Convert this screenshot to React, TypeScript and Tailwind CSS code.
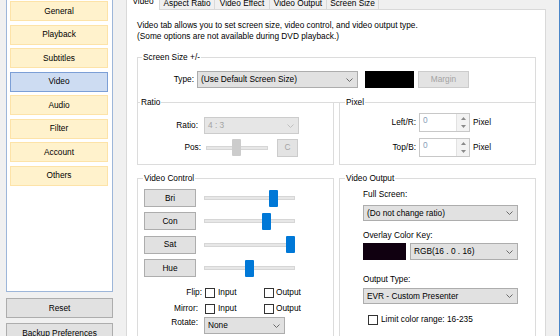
import React from "react";

const Chevron = ({ light = false }: { light?: boolean }) => (
  <svg width="7" height="4" viewBox="0 0 7 4" className="shrink-0">
    <path d="M0.5 0.5 L3.5 3.5 L6.5 0.5" fill="none" stroke={light ? "#c0c0c0" : "#6a6a6a"} strokeWidth="1" />
  </svg>
);

const Select = ({ text, cls, disabled = false }: { text: string; cls: string; disabled?: boolean }) => (
  <div
    className={`flex items-center justify-between pl-[3px] pr-[4px] border shrink-0 ${
      disabled ? "border-[#cccccc] bg-[#e6e6e6] text-[#a3a3a3]" : "border-[#adadad] bg-[#e1e1e1] text-black"
    } ${cls}`}
  >
    <span className="whitespace-nowrap">{text}</span>
    <Chevron light={disabled} />
  </div>
);

const Group = ({
  label,
  legendCls,
  cls,
  children,
}: {
  label: string;
  legendCls: string;
  cls: string;
  children?: React.ReactNode;
}) => (
  <div className={`border border-[#dcdcdc] bg-white flex flex-col ${cls}`}>
    <div className={`-mt-[6px] h-[11px] w-fit px-[1px] bg-white whitespace-nowrap ${legendCls}`}>{label}</div>
    {children}
  </div>
);

const Slider = ({ pos, cls, disabled = false }: { pos: number; cls: string; disabled?: boolean }) => (
  <div className={`relative h-[17px] flex items-center shrink-0 ${cls}`}>
    <div className="w-full h-[4px] bg-[#e7e7e7] border border-[#d6d6d6]" />
    <div
      className={`absolute top-0 w-[9px] h-[17px] rounded-[1px] ${disabled ? "bg-[#cccccc]" : "bg-[#0078d7]"}`}
      style={{ left: pos }}
    />
  </div>
);

const Check = () => <span className="block w-[10px] h-[10px] border border-[#333333] bg-white shrink-0" />;

const Spin = () => (
  <div className="flex w-[51px] h-[19px] border border-[#c8c8c8] bg-white shrink-0">
    <div className="flex-1 pl-[3px] pt-[1px] text-[#8aa0b8]">0</div>
    <div className="w-[13px] flex flex-col bg-[#f3f3f3] border-l border-[#e2e2e2]">
      <div className="flex-1 flex items-center justify-center">
        <svg width="5" height="3" viewBox="0 0 5 3">
          <path d="M2.5 0 L5 3 L0 3 Z" fill="#8a8a8a" />
        </svg>
      </div>
      <div className="flex-1 flex items-center justify-center">
        <svg width="5" height="3" viewBox="0 0 5 3">
          <path d="M0 0 L5 0 L2.5 3 Z" fill="#8a8a8a" />
        </svg>
      </div>
    </div>
  </div>
);

const navItems = ["General", "Playback", "Subtitles", "Video", "Audio", "Filter", "Account", "Others"];

export default function App() {
  return (
    <div className="w-[560px] h-[336px] overflow-hidden bg-[#f0f0f0] flex border-r border-[#4a86c8] font-['Liberation_Sans',Arial,sans-serif] text-[8.3px] leading-[11px] text-black">
      {/* Left column */}
      <div className="w-[126px] shrink-0 pl-[6px] flex flex-col">
        <div className="-mt-[3px] w-[107px] h-[295px] shrink-0 border border-[#9db6d9] bg-white pt-[3px] pl-[3px] flex flex-col gap-[3.5px]">
          {navItems.map((n) => (
            <div
              key={n}
              className={`w-[98px] h-[20px] shrink-0 border flex items-center justify-center ${
                n === "Video" ? "bg-[#cddcf2] border-[#7c9fd6]" : "bg-[#fff2cc] border-[#fde3a8]"
              }`}
            >
              {n}
            </div>
          ))}
        </div>
        <div className="mt-[6px] w-[107px] h-[20px] shrink-0 border border-[#adadad] bg-[#e1e1e1] flex items-center justify-center">
          Reset
        </div>
        <div className="mt-[5px] w-[107px] h-[20px] shrink-0 border border-[#adadad] bg-[#e1e1e1] flex items-center justify-center">
          Backup Preferences
        </div>
      </div>

      {/* Main */}
      <div className="w-[420px] shrink-0 flex flex-col">
        <div className="flex items-end h-[13px] -mt-[4px] shrink-0 relative z-10">
          <div className="w-[34px] h-[14px] -mb-[1px] bg-white border-l border-r border-[#d9d9d9] text-center">Video</div>
          <div className="w-[55px] h-[12px] border-t border-r border-[#d9d9d9] text-center">Aspect Ratio</div>
          <div className="w-[55px] h-[12px] border-t border-r border-[#d9d9d9] text-center">Video Effect</div>
          <div className="w-[57px] h-[12px] border-t border-r border-[#d9d9d9] text-center">Video Output</div>
          <div className="w-[52px] h-[12px] border-t border-r border-[#d9d9d9] text-center">Screen Size</div>
        </div>
        <div className="w-[420px] h-[400px] shrink-0 bg-white border border-[#d9d9d9] pt-[10px] pl-[10px]">
          <p>
            Video tab allows you to set screen size, video control, and video output type.
            <br />
            (Some options are not available during DVD playback.)
          </p>

          <Group label="Screen Size +/-" legendCls="ml-[4px]" cls="mt-[15px] w-[399px] pb-[14px]">
            <div className="mt-[8px] h-[17px] flex items-center">
              <div className="w-[56px] text-right shrink-0">Type:</div>
              <Select text="(Use Default Screen Size)" cls="ml-[3px] w-[161px] h-[17px]" />
              <div className="ml-[7px] w-[49px] h-[17px] bg-black shrink-0" />
              <div className="ml-[4px] w-[51px] h-[17px] shrink-0 border border-[#cccccc] bg-[#e3e3e3] text-[#a3a3a3] flex items-center justify-center">
                Margin
              </div>
            </div>
          </Group>

          <div className="flex gap-[5px] -mt-[1px] w-[399px]">
            <Group label="Ratio" legendCls="ml-[2px]" cls="w-[197px] pb-[7px]">
              <div className="mt-[9px] h-[17px] flex items-center">
                <div className="w-[60px] text-right shrink-0">Ratio:</div>
                <Select text="4 : 3" cls="ml-[6px] w-[95px] h-[17px]" disabled />
              </div>
              <div className="mt-[4px] h-[19px] flex items-center">
                <div className="w-[63px] text-right shrink-0">Pos:</div>
                <Slider pos={26} cls="ml-[5px] w-[62px]" disabled />
                <div className="ml-[9px] w-[21px] h-[18px] shrink-0 border border-[#cccccc] bg-[#e3e3e3] text-[#a3a3a3] flex items-center justify-center">
                  C
                </div>
              </div>
            </Group>
            <Group label="Pixel" legendCls="ml-[5px]" cls="w-[197px] pb-[7px]">
              <div className="mt-[5px] h-[19px] flex items-center">
                <div className="w-[76px] text-right shrink-0">Left/R:</div>
                <div className="ml-[3px]">
                  <Spin />
                </div>
                <div className="ml-[3px]">Pixel</div>
              </div>
              <div className="mt-[6px] h-[19px] flex items-center">
                <div className="w-[76px] text-right shrink-0">Top/B:</div>
                <div className="ml-[3px]">
                  <Spin />
                </div>
                <div className="ml-[3px]">Pixel</div>
              </div>
            </Group>
          </div>

          <div className="flex gap-[5px] mt-[13px] w-[399px]">
            <Group label="Video Control" legendCls="ml-[5px]" cls="w-[197px] pb-[10px]">
              <div className="mt-[5px] flex flex-col gap-[5.4px]">
                {[
                  ["Bri", 65],
                  ["Con", 58],
                  ["Sat", 82],
                  ["Hue", 41],
                ].map(([n, p]) => (
                  <div key={n as string} className="h-[18px] flex items-center">
                    <div className="ml-[6px] w-[52px] h-[18px] shrink-0 border border-[#adadad] bg-[#e1e1e1] flex items-center justify-center">
                      {n}
                    </div>
                    <Slider pos={p as number} cls="ml-[8px] w-[91px]" />
                  </div>
                ))}
              </div>
              <div className="mt-[10px] h-[11px] flex items-center">
                <div className="w-[64px] text-right shrink-0">Flip:</div>
                <div className="ml-[3px] w-[59px] flex items-center shrink-0">
                  <Check />
                  <span className="ml-[3px]">Input</span>
                </div>
                <Check />
                <span className="ml-[2px]">Output</span>
              </div>
              <div className="mt-[5px] h-[11px] flex items-center">
                <div className="w-[60px] text-right shrink-0">Mirror:</div>
                <div className="ml-[7px] w-[59px] flex items-center shrink-0">
                  <Check />
                  <span className="ml-[3px]">Input</span>
                </div>
                <Check />
                <span className="ml-[2px]">Output</span>
              </div>
              <div className="mt-[3px] h-[17px] flex items-start">
                <div className="w-[60px] text-right shrink-0">Rotate:</div>
                <Select text="None" cls="ml-[6px] w-[81px] h-[17px]" />
              </div>
            </Group>
            <Group label="Video Output" legendCls="ml-[5px]" cls="w-[197px] pb-[10px]">
              <div className="pl-[23px] flex flex-col">
                <div className="mt-[5px]">Full Screen:</div>
                <Select text="(Do not change ratio)" cls="mt-[5px] w-[155px] h-[16px]" />
                <div className="mt-[9px]">Overlay Color Key:</div>
                <div className="mt-[2px] h-[17px] flex">
                  <div className="w-[43px] h-[17px] bg-[#100010] shrink-0" />
                  <Select text="RGB(16 . 0 . 16)" cls="ml-[4px] w-[108px] h-[17px]" />
                </div>
                <div className="mt-[14px]">Output Type:</div>
                <Select text="EVR - Custom Presenter" cls="mt-[3px] w-[155px] h-[16px]" />
                <div className="mt-[10px] h-[11px] flex items-center ml-[5px]">
                  <Check />
                  <span className="ml-[3px]">Limit color range: 16-235</span>
                </div>
              </div>
            </Group>
          </div>
        </div>
      </div>
    </div>
  );
}
